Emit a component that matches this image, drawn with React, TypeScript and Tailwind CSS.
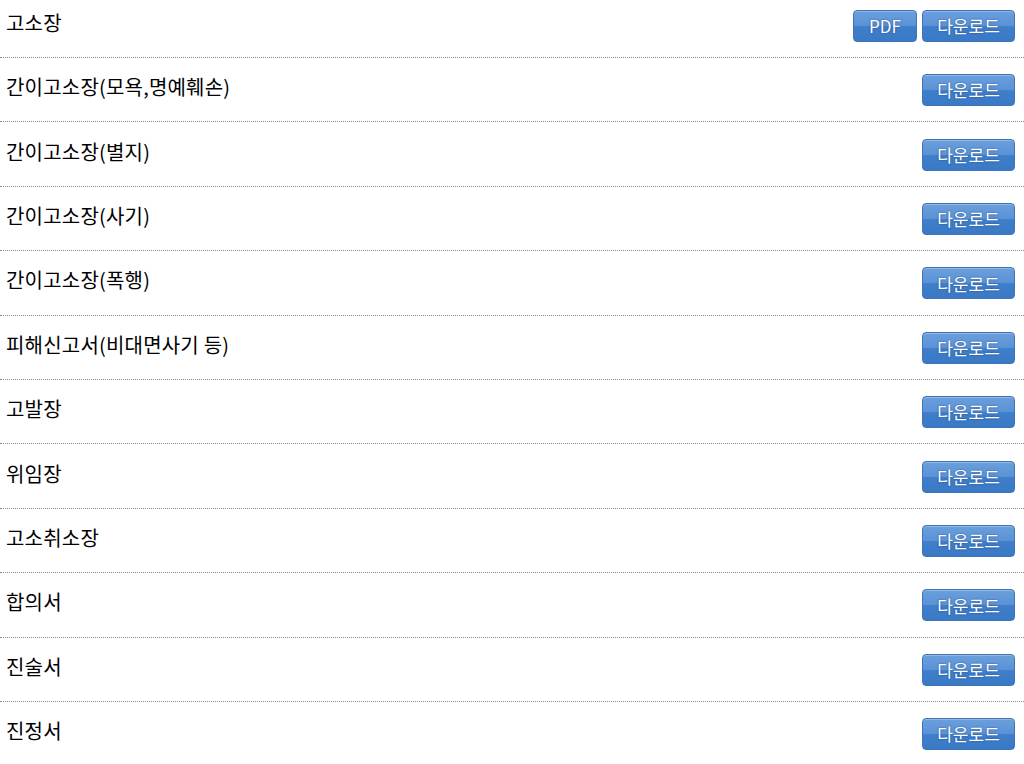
const forms: { name: string; pdf?: boolean }[] = [
  { name: "고소장", pdf: true },
  { name: "간이고소장(모욕,명예훼손)" },
  { name: "간이고소장(별지)" },
  { name: "간이고소장(사기)" },
  { name: "간이고소장(폭행)" },
  { name: "피해신고서(비대면사기 등)" },
  { name: "고발장" },
  { name: "위임장" },
  { name: "고소취소장" },
  { name: "합의서" },
  { name: "진술서" },
  { name: "진정서" },
];

function BlueButton({ label, width }: { label: string; width: string }) {
  return (
    <button
      type="button"
      className={`${width} h-[32px] flex items-center justify-center rounded-[4px] border border-[#3f74b8] bg-[linear-gradient(to_bottom,#6b9fdd_0%,#5b93d6_48%,#3f7fca_52%,#3a79c5_100%)] text-[17px] text-white [text-shadow:0_0_2px_rgba(20,50,110,0.7)] shadow-[inset_0_1px_0_rgba(255,255,255,0.25)]`}
    >
      {label}
    </button>
  );
}

export default function App() {
  return (
    <div className="w-[1024px] h-[764px] overflow-hidden bg-white font-['Malgun_Gothic','Noto_Sans_CJK_KR',sans-serif]">
      <ul className="-mt-[6.4px]">
        {forms.map((f) => (
          <li
            key={f.name}
            className="h-[64.4px] flex items-center justify-between pl-[6px] pr-[9px] border-b border-dotted border-[#8a8a8a]"
          >
            <span className="text-[20px] text-black tracking-[0.2px] -mt-[5px]">{f.name}</span>
            <div className="flex gap-[5px] mt-[1px]">
              {f.pdf && <BlueButton label="PDF" width="w-[64px]" />}
              <BlueButton label="다운로드" width="w-[93px]" />
            </div>
          </li>
        ))}
      </ul>
    </div>
  );
}
